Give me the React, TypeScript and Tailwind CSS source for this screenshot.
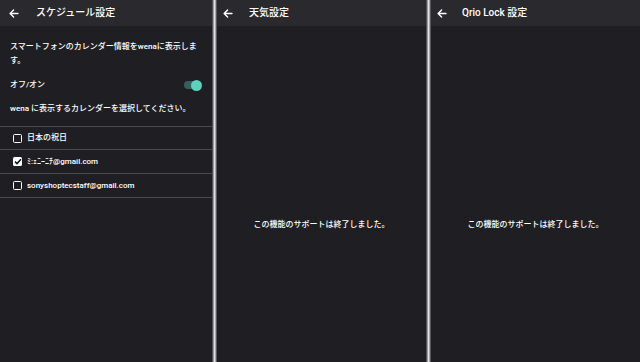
import React from "react";

const font = { fontFamily: 'Roboto, "Noto Sans CJK JP", "Noto Sans", sans-serif' };

function Arrow() {
  return (
    <svg width="10" height="9" viewBox="0 0 10 9" fill="none" stroke="white" strokeWidth="1.4" strokeLinecap="round" strokeLinejoin="round">
      <path d="M9 4.5H1.2M4.6 1L1.1 4.5L4.6 8" />
    </svg>
  );
}

function Header({ title, pad, gap }: { title: string; pad: string; gap: string }) {
  return (
    <div className={`h-[26px] bg-[#2a2a2e] flex items-center ${pad}`}>
      <Arrow />
      <span className={`${gap} text-[10px] font-medium text-white leading-none`}>{title}</span>
    </div>
  );
}

function Divider() {
  return <div className="w-[5px] h-full bg-[linear-gradient(to_right,#2c2c30,#8a8a8e,#e2e2e2,#9c9c9c,#2c2c30)]" />;
}

function Check({ checked }: { checked?: boolean }) {
  return checked ? (
    <div className="w-[9px] h-[9px] rounded-[1.5px] bg-white flex items-center justify-center">
      <svg width="8" height="7" viewBox="0 0 8 7" fill="none" stroke="#111" strokeWidth="1.5">
        <path d="M1 3.6L3 5.6L7 1.2" />
      </svg>
    </div>
  ) : (
    <div className="w-[9px] h-[9px] rounded-[1.5px] border-[1.5px] border-white" />
  );
}

function Row({ label, checked, first }: { label: string; checked?: boolean; first?: boolean }) {
  return (
    <div className={`h-[24px] flex items-center pl-[13px] gap-[5px] border-b border-[#4b4b50] ${first ? "border-t" : ""}`}>
      <Check checked={checked} />
      <span className="text-[8px] text-white font-medium leading-none">{label}</span>
    </div>
  );
}

function Ended() {
  return (
    <div className="flex-1 bg-[#1f1f23] flex flex-col">
      <div className="pt-[192px] text-center text-[8px] text-white font-medium leading-[14px]">
        この機能のサポートは終了しました。
      </div>
    </div>
  );
}

export default function App() {
  return (
    <div className="w-[640px] h-[362px] flex bg-[#1f1f23] overflow-hidden" style={font}>
      <div className="w-[212px] h-full flex flex-col">
        <Header title="スケジュール設定" pad="pl-[9px]" gap="ml-[17px]" />
        <div className="flex-1 bg-[#1f1f23] flex flex-col">
          <div className="px-[10px] pt-[14px] text-[8px] leading-[14px] text-white font-medium">
            スマートフォンのカレンダー情報をwenaに表示しま
            <br />
            す。
          </div>
          <div className="mt-[7px] h-[20px] pl-[10px] pr-[10px] flex items-center justify-between">
            <span className="text-[8px] text-white font-medium leading-none">オフ/オン</span>
            <div className="relative w-[18px] h-[12px] flex items-center">
              <div className="w-[16px] h-[8px] rounded-full bg-[#35605b]" />
              <div className="absolute right-0 top-[0.5px] w-[11px] h-[11px] rounded-full bg-[#5fcfc0]" />
            </div>
          </div>
          <div className="mt-[7px] px-[10px] text-[8px] leading-[14px] text-white font-medium">
            wena に表示するカレンダーを選択してください。
          </div>
          <div className="mt-[10px]">
            <Row label="日本の祝日" first />
            <Row label="ﾐ:ｪﾆｰﾆﾁ@gmail.com" checked />
            <Row label="sonyshoptecstaff@gmail.com" />
          </div>
        </div>
      </div>
      <Divider />
      <div className="flex-1 h-full flex flex-col">
        <Header title="天気設定" pad="pl-[6px]" gap="ml-[16px]" />
        <Ended />
      </div>
      <Divider />
      <div className="flex-1 h-full flex flex-col">
        <Header title="Qrio Lock 設定" pad="pl-[6px]" gap="ml-[15px]" />
        <Ended />
      </div>
    </div>
  );
}
